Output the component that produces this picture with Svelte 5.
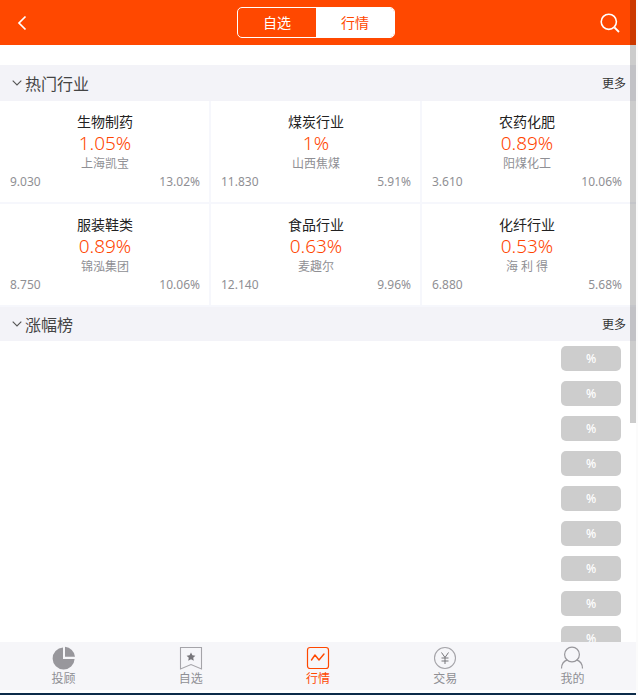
<script>
    let cards = [
        { name: "生物制药", pct: "1.05%", stock: "上海凯宝", price: "9.030", change: "13.02%" },
        { name: "煤炭行业", pct: "1%", stock: "山西焦煤", price: "11.830", change: "5.91%" },
        { name: "农药化肥", pct: "0.89%", stock: "阳煤化工", price: "3.610", change: "10.06%" },
        { name: "服装鞋类", pct: "0.89%", stock: "锦泓集团", price: "8.750", change: "10.06%" },
        { name: "食品行业", pct: "0.63%", stock: "麦趣尔", price: "12.140", change: "9.96%" },
        { name: "化纤行业", pct: "0.53%", stock: "海 利 得", price: "6.880", change: "5.68%" },
    ];

    let rows = [0, 1, 2, 3, 4, 5, 6, 7, 8];
</script>

<div class="page">
    <div class="main">
        <header class="topbar">
            <svg class="back" width="10" height="16" viewBox="0 0 10 16">
                <path d="M8.500 1.500 2 8l6.500 6.500" fill="none" stroke="#fff" stroke-width="1.700" />
            </svg>
            <div class="tabs">
                <div class="tab">自选</div>
                <div class="tab active">行情</div>
            </div>
            <svg class="search" width="20" height="20" viewBox="0 0 20 20">
                <circle cx="8.800" cy="8.800" r="7.600" fill="none" stroke="#fff" stroke-width="1.600" />
                <path d="M14.500 14.500 19 19" fill="none" stroke="#fff" stroke-width="1.800" />
            </svg>
        </header>

        <div class="section-head first">
            <div class="head-left">
                <svg width="10" height="6" viewBox="0 0 10 6">
                    <path d="M.7.7 5 5 9.300.7" fill="none" stroke="#555" stroke-width="1.100" />
                </svg>
                <span>热门行业</span>
            </div>
            <span class="more">更多</span>
        </div>

        <div class="grid">
            {#each cards as c}
                <div class="card">
                    <div class="name">{c.name}</div>
                    <div class="pct">{c.pct}</div>
                    <div class="stock">{c.stock}</div>
                    <div class="nums">
                        <span>{c.price}</span>
                        <span>{c.change}</span>
                    </div>
                </div>
            {/each}
        </div>

        <div class="section-head second">
            <div class="head-left">
                <svg width="10" height="6" viewBox="0 0 10 6">
                    <path d="M.7.7 5 5 9.300.7" fill="none" stroke="#555" stroke-width="1.100" />
                </svg>
                <span>涨幅榜</span>
            </div>
            <span class="more">更多</span>
        </div>

        <div class="list">
            {#each rows as r}
                <div class="row"><div class="badge">%</div></div>
            {/each}
        </div>

        <nav class="tabbar">
            <div class="item">
                <svg width="24" height="24" viewBox="0 0 24 24">
                    <path d="M11 1.500A11 11 0 1 0 22.600 13H11z" fill="#98979c" />
                    <path d="M13 .8A11 11 0 0 1 23 10.800H13z" fill="#98979c" />
                </svg>
                <span>投顾</span>
            </div>
            <div class="item">
                <svg width="24" height="24" viewBox="0 0 24 24">
                    <path d="M1.500 1.500h21V23L12 18.500 1.500 23z" fill="none" stroke="#a5a4a9" stroke-width="1.100" />
                    <path d="m12 6.500 1.400 2.800 3 .4-2.200 2.100.6 3-2.800-1.500-2.800 1.500.6-3-2.200-2.100 3-.4z" fill="#77767b" />
                </svg>
                <span>自选</span>
            </div>
            <div class="item on">
                <svg width="24" height="24" viewBox="0 0 24 24">
                    <rect x="1.500" y="1.500" width="21" height="21" rx="2.500" fill="none" stroke="#ff4800" stroke-width="1.200" />
                    <path d="M5.500 14 9 9l4 5 5-6" fill="none" stroke="#ff4800" stroke-width="1.400" stroke-linecap="round" stroke-linejoin="round" />
                </svg>
                <span>行情</span>
            </div>
            <div class="item">
                <svg width="24" height="24" viewBox="0 0 24 24">
                    <circle cx="12" cy="12" r="10.500" fill="none" stroke="#a5a4a9" stroke-width="1.100" />
                    <path d="m8.500 6.500 3.500 5 3.500-5M12 11.500V18M8.500 12h7M8.500 15h7" fill="none" stroke="#77767b" stroke-width="1" />
                </svg>
                <span>交易</span>
            </div>
            <div class="item">
                <svg width="24" height="24" viewBox="0 0 24 24">
                    <circle cx="12" cy="8.500" r="7.400" fill="none" stroke="#98979c" stroke-width="1.200" />
                    <path d="M1.500 22.500c0-4.500 2.700-7.500 6-8.600M22.500 22.500c0-4.500-2.700-7.500-6-8.600" fill="none" stroke="#98979c" stroke-width="1.200" />
                </svg>
                <span>我的</span>
            </div>
        </nav>
        <div class="thumb"></div>
    </div>
</div>

<style>
    :global(body) {
        margin: 0;
        background: #fff;
    }

    .page {
        width: 638px;
        height: 695px;
        overflow: hidden;
        background: #fbfbfb;
        font-family: "Noto Sans", "Noto Sans CJK SC", sans-serif;
    }

    .main {
        position: relative;
        width: 636px;
        height: 693px;
        overflow: hidden;
        background: #fff;
        box-shadow: 0 2px 0 #0d2c4a;
    }

    .topbar {
        display: flex;
        align-items: center;
        height: 45px;
        padding: 0 16px 0 17px;
        background: #ff4800;
    }

    .tabs {
        display: flex;
        width: 158px;
        height: 31px;
        margin-left: 210px;
        margin-right: auto;
        border: 1px solid #fff;
        border-radius: 5px;
        overflow: hidden;
        box-sizing: border-box;
    }

    .tab {
        flex: 1;
        color: #fff;
        font-size: 14px;
        line-height: 29px;
        text-align: center;
    }

    .tab.active {
        background: #fff;
        color: #ff4800;
    }

    .section-head {
        display: flex;
        align-items: center;
        justify-content: space-between;
        height: 36px;
        padding: 0 10px 0 12px;
        background: #f3f3f8;
        color: #444;
    }

    .section-head.first {
        margin-top: 20px;
    }

    .section-head.second {
        height: 35px;
    }

    .head-left {
        display: flex;
        align-items: center;
        gap: 3px;
        font-size: 16px;
    }

    .more {
        font-size: 12px;
        color: #333;
    }

    .grid {
        display: grid;
        grid-template-columns: 211px 211px 214px;
        grid-auto-rows: 103px;
        height: 205px;
    }

    .card {
        box-sizing: border-box;
        padding: 11px 9px 0 10px;
        border-right: 2px solid #f6f7fc;
        border-bottom: 2px solid #f6f7fc;
        text-align: center;
        overflow: hidden;
    }

    .card:nth-child(3n) {
        border-right: none;
        padding-right: 14px;
    }

    .name {
        font-size: 14px;
        line-height: 19px;
        color: #222;
    }

    .pct {
        font-size: 19px;
        font-weight: 300;
        line-height: 24px;
        color: #ff4500;
    }

    .stock {
        font-size: 12px;
        line-height: 18px;
        color: #8f8f94;
    }

    .nums {
        display: flex;
        justify-content: space-between;
        font-size: 12px;
        line-height: 18px;
        color: #8f8f94;
    }

    .list {
        padding-top: 5px;
    }

    .row {
        display: flex;
        justify-content: flex-end;
        height: 35px;
        padding-right: 15px;
    }

    .badge {
        width: 60px;
        height: 25px;
        border-radius: 5px;
        background: #cdcdcd;
        color: #fff;
        font-size: 12px;
        font-weight: 500;
        line-height: 25px;
        text-align: center;
    }

    .tabbar {
        position: absolute;
        left: 0;
        right: 0;
        bottom: 3px;
        display: flex;
        height: 48px;
        background: #f6f6f9;
    }

    .item {
        flex: 1;
        display: flex;
        flex-direction: column;
        align-items: center;
        padding-top: 4px;
        font-size: 12px;
        line-height: 17px;
        color: #8f8f94;
    }

    .item.on {
        color: #ff4800;
    }

    /* overlay scrollbar thumb */
    .thumb {
        position: absolute;
        top: 0;
        right: 0;
        width: 6px;
        height: 423px;
        background: rgba(0, 0, 0, 0.2);
    }
</style>
